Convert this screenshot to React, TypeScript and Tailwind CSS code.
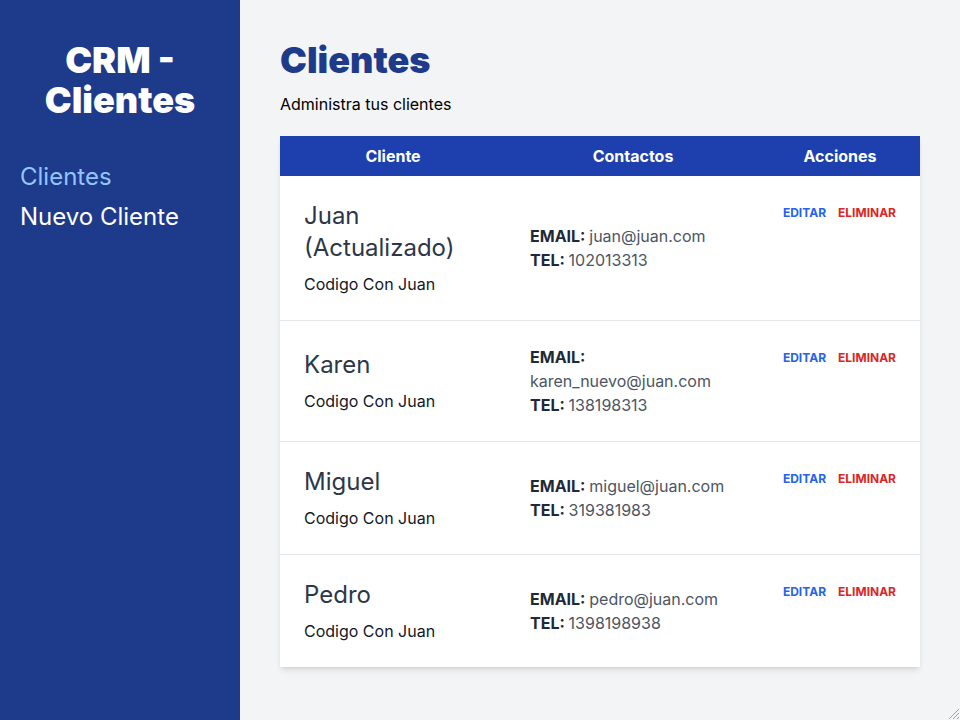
import React from 'react';

interface Cliente {
  id: number;
  nombre: string;
  empresa: string;
  email: string;
  telefono: string;
}

const clientes: Cliente[] = [
  { id: 1, nombre: 'Juan (Actualizado)', empresa: 'Codigo Con Juan', email: 'juan@juan.com', telefono: '102013313' },
  { id: 2, nombre: 'Karen', empresa: 'Codigo Con Juan', email: 'karen_nuevo@juan.com', telefono: '138198313' },
  { id: 3, nombre: 'Miguel', empresa: 'Codigo Con Juan', email: 'miguel@juan.com', telefono: '319381983' },
  { id: 4, nombre: 'Pedro', empresa: 'Codigo Con Juan', email: 'pedro@juan.com', telefono: '1398198938' },
];

function ClienteRow({ cliente }: { cliente: Cliente }) {
  return (
    <tr>
      <td className="p-6 align-middle">
        <p className="text-2xl text-[#2d3748]">{cliente.nombre}</p>
        <p className="mt-2 text-[#111827]">{cliente.empresa}</p>
      </td>
      <td className="p-6 align-middle">
        <p className="text-[#4b5563]">
          <span className="text-[#1f2937] font-bold uppercase">Email: </span>
          {cliente.email}
        </p>
        <p className="text-[#4b5563]">
          <span className="text-[#1f2937] font-bold uppercase">Tel: </span>
          {cliente.telefono}
        </p>
      </td>
      <td className="pl-2 pr-6 pt-[25px] align-top">
        <div className="flex justify-end gap-3 whitespace-nowrap">
          <button className="py-1 text-xs font-bold uppercase text-[#2563eb]">Editar</button>
          <button className="py-1 text-xs font-bold uppercase text-[#dc2626]">Eliminar</button>
        </div>
      </td>
    </tr>
  );
}

export default function App() {
  return (
    <div className="flex h-screen bg-[#f3f4f6] font-['Inter',sans-serif] text-black overflow-hidden">
      {/* Sidebar */}
      <aside className="w-[240px] shrink-0 bg-[#1e3a8a] px-5 pt-10">
        <h2 className="text-4xl font-black text-white text-center">CRM - Clientes</h2>
        <nav className="mt-[41px] flex flex-col gap-2">
          <a className="text-2xl text-[#93c5fd]" href="#">Clientes</a>
          <a className="text-2xl text-white" href="#">Nuevo Cliente</a>
        </nav>
      </aside>

      {/* Contenido */}
      <main className="flex-1 px-10 pt-10">
        <h1 className="text-4xl font-black text-[#1e3a8a]">Clientes</h1>
        <p className="mt-3">Administra tus clientes</p>

        <table className="mt-5 w-full table-fixed bg-white shadow-md">
          <colgroup>
            <col className="w-[226px]" />
            <col className="w-[254px]" />
            <col className="w-[160px]" />
          </colgroup>
          <thead className="bg-[#1e40af] text-white">
            <tr>
              <th className="py-2 font-bold">Cliente</th>
              <th className="py-2 font-bold">Contactos</th>
              <th className="py-2 font-bold">Acciones</th>
            </tr>
          </thead>
          <tbody className="divide-y divide-[#e5e7eb]">
            {clientes.map((cliente) => (
              <ClienteRow key={cliente.id} cliente={cliente} />
            ))}
          </tbody>
        </table>
      </main>

      {/* resize grip */}
      <svg className="fixed bottom-0 right-0" width="14" height="14" viewBox="0 0 14 14">
        <path d="M13 3 L3 13 M13 7 L7 13 M13 11 L11 13" stroke="#9ca3af" strokeWidth="1" />
      </svg>
    </div>
  );
}
